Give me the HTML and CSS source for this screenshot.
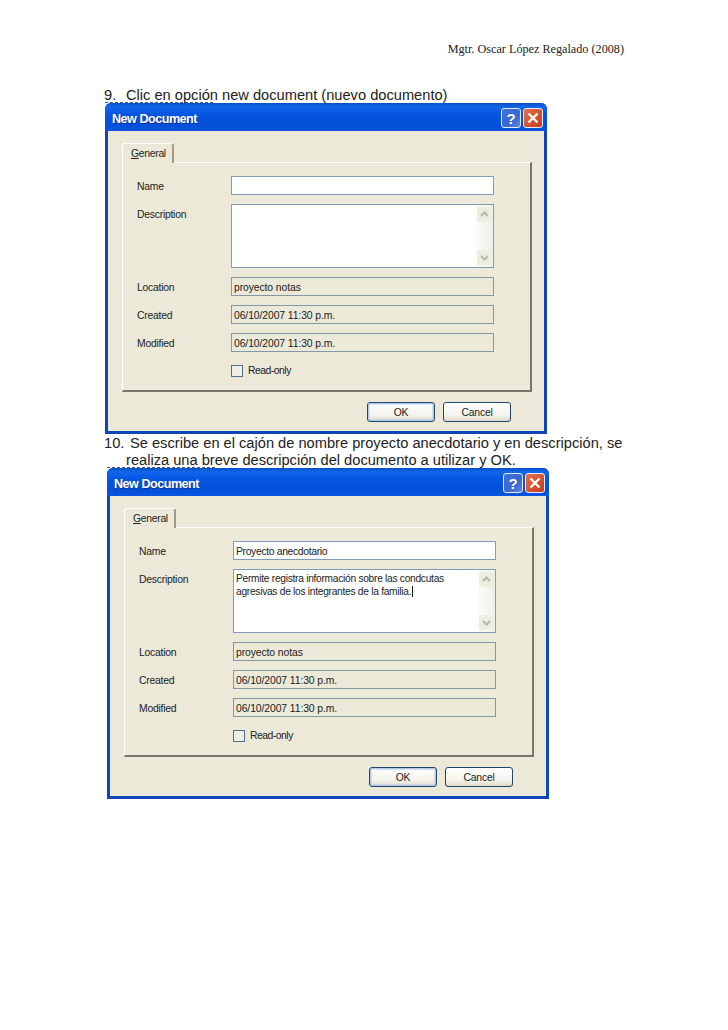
FILE: index.html
```html
<!DOCTYPE html>
<html lang="es">
<head>
<meta charset="utf-8">
<title>Mgtr. Oscar López Regalado (2008)</title>
<link rel="stylesheet" href="styles.css">
</head>
<body>
<main class="page">
  <header class="running-head">Mgtr. Oscar López Regalado (2008)</header>

  <div class="step"><span class="step-num">9.</span>Clic en opción new document (nuevo documento)</div>

  <section class="dialog dialog-first">
    <div class="titlebar">
      <span class="title">New Document</span>
      <span class="caption-btns">
        <span class="cap-btn cap-help">?</span>
        <span class="cap-btn cap-close"><svg viewBox="0 0 20 20" width="20" height="20"><path d="M5.5 5.5 14.5 14.5M14.5 5.5 5.5 14.5" stroke="#fff" stroke-width="2.4" fill="none"/></svg></span>
      </span>
    </div>
    <div class="client">
      <div class="tab"><span class="tab-key">G</span>eneral</div>
      <div class="panel">
        <div class="form">
          <span class="label">Name</span><div class="field"></div>
          <span class="label label-top">Description</span>
          <div class="field field-area">
            <div class="area-text"></div>
            <div class="scroll">
              <span class="scroll-btn"><svg viewBox="0 0 15 15" width="15" height="15"><path d="M4 9 7.5 5.5 11 9" stroke="#b4b9a8" stroke-width="2" fill="none"/></svg></span>
              <span class="scroll-btn"><svg viewBox="0 0 15 15" width="15" height="15"><path d="M4 6 7.5 9.5 11 6" stroke="#b4b9a8" stroke-width="2" fill="none"/></svg></span>
            </div>
          </div>
          <span class="label">Location</span><div class="field field-ro">proyecto notas</div>
          <span class="label">Created</span><div class="field field-ro">06/10/2007 11:30 p.m.</div>
          <span class="label">Modified</span><div class="field field-ro">06/10/2007 11:30 p.m.</div>
          <span></span><div class="check"><span class="check-box"></span><span class="check-text">Read-only</span></div>
        </div>
      </div>
      <div class="actions">
        <span class="btn btn-default">OK</span>
        <span class="btn">Cancel</span>
      </div>
    </div>
  </section>

  <div class="step"><span class="step-num step-num-wide">10.</span>Se escribe en el cajón de nombre proyecto anecdotario y en descripción, se realiza una breve descripción del documento a utilizar y OK.</div>

  <section class="dialog dialog-second">
    <div class="titlebar">
      <span class="title">New Document</span>
      <span class="caption-btns">
        <span class="cap-btn cap-help">?</span>
        <span class="cap-btn cap-close"><svg viewBox="0 0 20 20" width="20" height="20"><path d="M5.5 5.5 14.5 14.5M14.5 5.5 5.5 14.5" stroke="#fff" stroke-width="2.4" fill="none"/></svg></span>
      </span>
    </div>
    <div class="client">
      <div class="tab"><span class="tab-key">G</span>eneral</div>
      <div class="panel">
        <div class="form">
          <span class="label">Name</span><div class="field field-name">Proyecto anecdotario</div>
          <span class="label label-top">Description</span>
          <div class="field field-area">
            <div class="area-text">Permite registra información sobre las condcutas agresivas de los integrantes de la familia.<span class="caret"></span></div>
            <div class="scroll">
              <span class="scroll-btn"><svg viewBox="0 0 15 15" width="15" height="15"><path d="M4 9 7.5 5.5 11 9" stroke="#b4b9a8" stroke-width="2" fill="none"/></svg></span>
              <span class="scroll-btn"><svg viewBox="0 0 15 15" width="15" height="15"><path d="M4 6 7.5 9.5 11 6" stroke="#b4b9a8" stroke-width="2" fill="none"/></svg></span>
            </div>
          </div>
          <span class="label">Location</span><div class="field field-ro">proyecto notas</div>
          <span class="label">Created</span><div class="field field-ro">06/10/2007 11:30 p.m.</div>
          <span class="label">Modified</span><div class="field field-ro">06/10/2007 11:30 p.m.</div>
          <span></span><div class="check"><span class="check-box"></span><span class="check-text">Read-only</span></div>
        </div>
      </div>
      <div class="actions">
        <span class="btn btn-default">OK</span>
        <span class="btn">Cancel</span>
      </div>
    </div>
  </section>
</main>
</body>
</html>
```

FILE: styles.css
```css
* { box-sizing: border-box; }

html, body { margin: 0; background: #fff; }

body { width: 728px; height: 1030px; overflow: hidden; }

.page {
  padding: 43px 100px 0 104px;
  font-family: "Liberation Sans", Arial, sans-serif;
  color: #1c1c1c;
}

.running-head {
  height: 13px;
  margin: 0 4px 30px 0;
  font: 12.2px/13px "Liberation Serif", "Times New Roman", serif;
  text-align: right;
  color: #222;
}

.step {
  padding: 1px 0 0 22px;
  margin-bottom: -1px;
  text-indent: -22px;
  font-size: 14.65px;
  line-height: 17px;
  color: #222;
}

.step-num {
  display: inline-block;
  width: 22px;
  text-indent: 0;
}

.step-num-wide { width: 26px; }

.dialog {
  position: relative;
  width: 442px;
  height: 331px;
  display: flex;
  flex-direction: column;
  border-radius: 6px 6px 0 0;
  background: #0f45b8;
}

.dialog::before {
  content: "";
  position: absolute;
  left: 0;
  top: -1px;
  width: 108px;
  border-top: 1px dashed #4a5a6e;
}

.dialog-first { margin-left: 1px; }

.dialog-second { margin-left: 3px; }

.titlebar {
  flex: 0 0 28px;
  display: flex;
  align-items: center;
  justify-content: space-between;
  padding: 2px 4px 0 7px;
  border-radius: 6px 6px 0 0;
  background: linear-gradient(180deg, #0a4fc4 0%, #1166ea 14%, #0556e2 40%, #0450d8 80%, #0a55e0 100%);
}

.title {
  margin-top: 2px;
  font-weight: 700;
  font-size: 12.6px;
  letter-spacing: -0.5px;
  color: #fff;
  text-shadow: 1px 1px 0 #0c2f9c;
}

.caption-btns { display: flex; gap: 2px; }

.cap-btn {
  width: 20px;
  height: 20px;
  display: flex;
  align-items: center;
  justify-content: center;
  border: 1px solid #e4ecfb;
  border-radius: 3px;
  color: #fff;
  font-weight: 700;
  font-size: 15px;
}

.cap-help { background: linear-gradient(135deg, #3e72dc, #3a66cf 60%, #5c8be6); }

.cap-close { background: linear-gradient(135deg, #e3724e, #d4502c 60%, #bf3c22); }

.cap-close svg { margin: -1px; flex: none; }

.client {
  flex: 1;
  margin: 0 3px 3px 3px;
  padding: 12px 12px 0 14px;
  background: #ece9d8;
  font-size: 10.4px;
  color: #222;
  display: flex;
  flex-direction: column;
}

.tab {
  align-self: flex-start;
  width: 52px;
  height: 20px;
  padding: 3px 0 0 8px;
  line-height: 14px;
  letter-spacing: -0.3px;
  border-top: 1px solid #fff;
  border-left: 1px solid #fff;
  border-right: 2px solid #9d9a8a;
  border-radius: 3px 3px 0 0;
  margin-bottom: -1px;
  position: relative;
  z-index: 1;
  background: #ece9d8;
}

.tab-key { text-decoration: underline; }

.panel {
  height: 230px;
  width: 410px;
  border-top: 1px solid #fff;
  border-left: 1px solid #fff;
  border-right: 2px solid #77766a;
  border-bottom: 2px solid #77766a;
  padding: 13px 0 0 14px;
}

.form {
  display: grid;
  grid-template-columns: 94px 263px;
  grid-template-rows: 19px 64px 19px 19px 19px 12px;
  row-gap: 9px;
  align-items: center;
}

.label {
  line-height: 14px;
  align-self: start;
  padding-top: 4px;
  letter-spacing: -0.25px;
}

.field {
  height: 19px;
  padding: 0 2px;
  line-height: 19px;
  letter-spacing: -0.1px;
  border: 1px solid #7f9db9;
  background: #fff;
}

.field-name { letter-spacing: -0.35px; }

.field-ro {
  background: #ece9d8;
  border-color: #8198a8;
}

.field-area {
  height: 64px;
  padding: 0;
  display: flex;
  align-items: stretch;
  justify-content: space-between;
}

.area-text {
  width: 244px;
  padding: 3px 0 0 2px;
  line-height: 12.5px;
  font-size: 10.2px;
  letter-spacing: -0.27px;
}

.caret {
  display: inline-block;
  width: 1px;
  height: 11px;
  margin-left: 1px;
  vertical-align: -2px;
  background: #111;
}

.scroll {
  flex: 0 0 16px;
  padding: 2px 1px;
  display: flex;
  flex-direction: column;
  justify-content: space-between;
  background: linear-gradient(90deg, #fbfbf8, #f1f0e8);
}

.scroll-btn {
  width: 15px;
  height: 15px;
  display: block;
  background: #eceee0;
  border-radius: 2px;
}

.scroll-btn svg { display: block; }

.check {
  margin-top: 8px;
  display: flex;
  align-items: center;
  gap: 5px;
  line-height: 12px;
}

.check-box {
  width: 12px;
  height: 12px;
  border: 1px solid #4e7190;
  background: #f0efe6;
}

.check-text { letter-spacing: -0.5px; }

.actions {
  margin: 10px 21px 0 0;
  display: flex;
  justify-content: flex-end;
  gap: 8px;
}

.btn {
  width: 68px;
  height: 20px;
  display: flex;
  align-items: center;
  justify-content: center;
  border: 1px solid #1f4770;
  border-radius: 3px;
  background: linear-gradient(180deg, #fff, #f3f2ea 70%, #dcd8c8);
  letter-spacing: -0.2px;
}

.btn-default {
  box-shadow: inset 0 0 0 1.5px #b4c9e8;
}
```
